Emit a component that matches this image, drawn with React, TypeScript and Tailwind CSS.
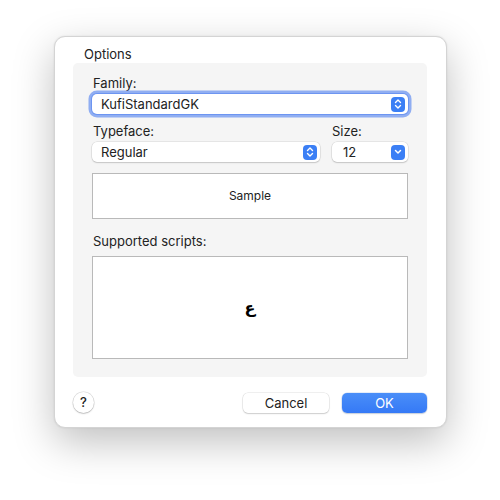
import React from "react";

const font = { fontFamily: "Inter, 'Liberation Sans', sans-serif" };

function Stepper({ single }: { single?: boolean }) {
  return (
    <div className="flex h-[15px] w-[14px] items-center justify-center rounded-[4px] bg-[#3b7ff5]">
      {single ? (
        <svg width="8" height="6" viewBox="0 0 8 6">
          <path d="M1.5 1.5 L4 4 L6.5 1.5" stroke="white" strokeWidth="1.5" fill="none" strokeLinecap="round" strokeLinejoin="round" />
        </svg>
      ) : (
        <svg width="8" height="12" viewBox="0 0 8 12">
          <path d="M1.5 4.5 L4 2 L6.5 4.5" stroke="white" strokeWidth="1.4" fill="none" strokeLinecap="round" strokeLinejoin="round" />
          <path d="M1.5 7.5 L4 10 L6.5 7.5" stroke="white" strokeWidth="1.4" fill="none" strokeLinecap="round" strokeLinejoin="round" />
        </svg>
      )}
    </div>
  );
}

export default function App() {
  return (
    <div className="h-[500px] w-[500px] bg-white pl-[54px] pt-[36px] text-[13px] text-[#222]" style={font}>
      <div className="flex h-[392px] w-[393px] flex-col rounded-[11px] border border-[#d4d4d4] bg-white shadow-[0_14px_40px_rgba(0,0,0,0.25),0_0_2px_rgba(0,0,0,0.1)]">
        <div className="h-[26px] pl-[29px] pt-[9px] leading-[16px]">Options</div>
        <div className="ml-[18px] flex h-[314px] w-[354px] flex-col rounded-[5px] bg-[#f5f5f5] px-[19px] pt-[12px]">
          <div className="pl-[1px] leading-[16px]">Family:</div>
          <div className="mt-[3px] flex h-[20px] items-center rounded-[5px] bg-white pl-[9px] pr-[3px] shadow-[0_0_0_1px_rgba(80,130,240,0.55),0_0_0_3.5px_rgba(110,150,240,0.75)]">
            <span className="flex-1 leading-[16px]">KufiStandardGK</span>
            <Stepper />
          </div>
          <div className="mt-[9px] flex gap-[12px]">
            <div className="flex w-[228px] flex-col">
              <div className="pl-[1px] leading-[16px]">Typeface:</div>
              <div className="mt-[3px] flex h-[20px] items-center rounded-[5px] bg-white pl-[9px] pr-[3px] shadow-[0_0_0_0.5px_rgba(0,0,0,0.12),0_1px_1.5px_rgba(0,0,0,0.15)]">
                <span className="flex-1 leading-[16px]">Regular</span>
                <Stepper />
              </div>
            </div>
            <div className="flex flex-1 flex-col">
              <div className="leading-[16px]">Size:</div>
              <div className="mt-[3px] flex h-[20px] items-center rounded-[5px] bg-white pl-[11px] pr-[3px] shadow-[0_0_0_0.5px_rgba(0,0,0,0.12),0_1px_1.5px_rgba(0,0,0,0.15)]">
                <span className="flex-1 leading-[16px]">12</span>
                <Stepper single />
              </div>
            </div>
          </div>
          <div className="mt-[11px] flex h-[46px] items-center justify-center border border-[#b9b9b9] bg-white text-[12px]">
            Sample
          </div>
          <div className="mt-[14px] pl-[1px] leading-[16px]">Supported scripts:</div>
          <div className="mt-[7px] flex h-[103px] items-center justify-center border border-[#b9b9b9] bg-white">
            <span className="text-[16px] font-bold leading-none text-black" style={{ fontFamily: "'DejaVu Sans', sans-serif" }}>
              ع
            </span>
          </div>
        </div>
        <div className="mt-[15px] flex items-center pl-[18px] pr-[19px]">
          <div className="flex h-[21px] w-[21px] items-center justify-center rounded-full bg-white text-[13px] font-medium shadow-[0_0_0_0.5px_rgba(0,0,0,0.15),0_1px_1.5px_rgba(0,0,0,0.18)]">
            ?
          </div>
          <div className="flex-1" />
          <button className="flex h-[20px] w-[86px] items-center justify-center rounded-[5px] bg-white leading-[16px] shadow-[0_0_0_0.5px_rgba(0,0,0,0.12),0_1px_1.5px_rgba(0,0,0,0.15)]">
            Cancel
          </button>
          <button className="ml-[13px] flex h-[20px] w-[85px] items-center justify-center rounded-[5px] bg-gradient-to-b from-[#4a8ef8] to-[#3579f6] leading-[16px] text-white shadow-[0_0_0_0.5px_rgba(0,80,200,0.2),0_1px_1.5px_rgba(0,0,0,0.15)]">
            OK
          </button>
        </div>
      </div>
    </div>
  );
}
